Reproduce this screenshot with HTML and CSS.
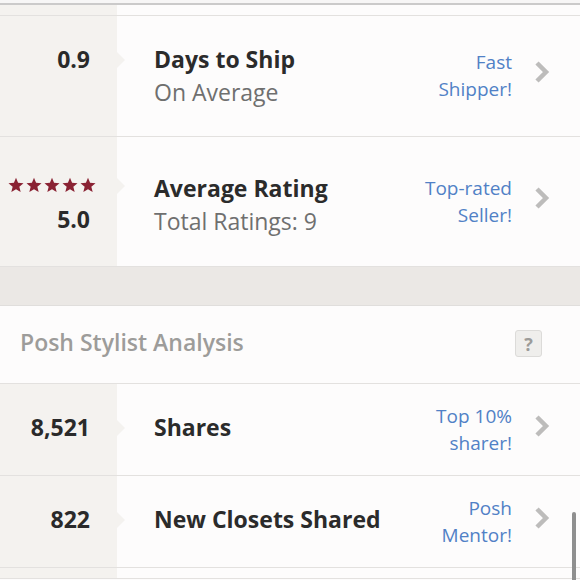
FILE: index.html
```html
<!DOCTYPE html>
<html lang="en">
<head>
  <meta charset="UTF-8" />
  <meta name="viewport" content="width=device-width, initial-scale=1.0"/>
  <title>Seller Stats</title>
  <link rel="stylesheet" href="styles.css">
</head>
<body>
  <div class="page">
    <div class="top-strip"></div>
    <div class="row stub">
      <div class="stat"></div>
      <div class="info"></div>
    </div>

    <div class="row tall">
      <div class="stat two-line">
        <span class="value">0.9</span>
        <span class="value"></span>
      </div>
      <div class="info">
        <div class="text">
          <div class="title">Days to Ship</div>
          <div class="sub">On Average</div>
        </div>
        <div class="badge">Fast<br>Shipper!</div>
        <svg class="chevron" width="16" height="24" viewBox="0 0 16 24"><path d="M3 3 L12 12 L3 21" fill="none" stroke="#bdbcbb" stroke-width="4.5"/></svg>
      </div>
    </div>

    <div class="row taller">
      <div class="stat two-line">
        <span class="stars">
          <svg width="16" height="16" viewBox="0 0 24 24"><path d="M12 1 L15.1 8.6 L23.3 9.2 L17 14.5 L19 22.5 L12 18.2 L5 22.5 L7 14.5 L0.7 9.2 L8.9 8.6 Z" fill="#8a2233"/></svg>
          <svg width="16" height="16" viewBox="0 0 24 24"><path d="M12 1 L15.1 8.6 L23.3 9.2 L17 14.5 L19 22.5 L12 18.2 L5 22.5 L7 14.5 L0.7 9.2 L8.9 8.6 Z" fill="#8a2233"/></svg>
          <svg width="16" height="16" viewBox="0 0 24 24"><path d="M12 1 L15.1 8.6 L23.3 9.2 L17 14.5 L19 22.5 L12 18.2 L5 22.5 L7 14.5 L0.7 9.2 L8.9 8.6 Z" fill="#8a2233"/></svg>
          <svg width="16" height="16" viewBox="0 0 24 24"><path d="M12 1 L15.1 8.6 L23.3 9.2 L17 14.5 L19 22.5 L12 18.2 L5 22.5 L7 14.5 L0.7 9.2 L8.9 8.6 Z" fill="#8a2233"/></svg>
          <svg width="16" height="16" viewBox="0 0 24 24"><path d="M12 1 L15.1 8.6 L23.3 9.2 L17 14.5 L19 22.5 L12 18.2 L5 22.5 L7 14.5 L0.7 9.2 L8.9 8.6 Z" fill="#8a2233"/></svg>
        </span>
        <span class="value">5.0</span>
      </div>
      <div class="info">
        <div class="text">
          <div class="title">Average Rating</div>
          <div class="sub">Total Ratings: 9</div>
        </div>
        <div class="badge">Top-rated<br>Seller!</div>
        <svg class="chevron" width="16" height="24" viewBox="0 0 16 24"><path d="M3 3 L12 12 L3 21" fill="none" stroke="#bdbcbb" stroke-width="4.5"/></svg>
      </div>
    </div>

    <div class="band"></div>

    <div class="section-head">
      <span>Posh Stylist Analysis</span>
      <span class="help">?</span>
    </div>

    <div class="row single">
      <div class="stat"><span class="value">8,521</span></div>
      <div class="info">
        <div class="text">
          <div class="title">Shares</div>
        </div>
        <div class="badge">Top 10%<br>sharer!</div>
        <svg class="chevron" width="16" height="24" viewBox="0 0 16 24"><path d="M3 3 L12 12 L3 21" fill="none" stroke="#bdbcbb" stroke-width="4.5"/></svg>
      </div>
    </div>

    <div class="row single">
      <div class="stat"><span class="value">822</span></div>
      <div class="info">
        <div class="text">
          <div class="title">New Closets Shared</div>
        </div>
        <div class="badge">Posh<br>Mentor!</div>
        <svg class="chevron" width="16" height="24" viewBox="0 0 16 24"><path d="M3 3 L12 12 L3 21" fill="none" stroke="#bdbcbb" stroke-width="4.5"/></svg>
      </div>
    </div>

    <div class="row stub">
      <div class="stat"></div>
      <div class="info"></div>
    </div>

    <div class="scrollbar"></div>
  </div>
</body>
</html>
```

FILE: styles.css
```css
body {
  margin: 0;
  font-family: "Open Sans", Lato, sans-serif;
  background: #fdfcfc;
}
.page {
  width: 580px;
  height: 580px;
  overflow: hidden;
  position: relative;
}
.top-strip {
  height: 3px;
  background: #f7f6f6;
  border-bottom: 2px solid #cbcaca;
}
.row {
  display: grid;
  grid-template-columns: 117px 1fr;
  height: 91px;
  border-bottom: 1px solid #e3e1df;
}
.row.stub {
  height: 10px;
}
.row.tall {
  height: 120px;
}
.row.taller {
  height: 129px;
}
.stat {
  background: #f4f2ef;
  display: flex;
  flex-direction: column;
  align-items: flex-end;
  justify-content: center;
  padding-right: 27px;
  position: relative;
}
.stat::after {
  content: "";
  position: absolute;
  right: -8px;
  top: 50%;
  margin-top: -10px;
  border-left: 8px solid #f4f2ef;
  border-top: 8px solid transparent;
  border-bottom: 8px solid transparent;
}
.stat.two-line::after {
  margin-top: -24px;
}
.row.stub .stat::after {
  display: none;
}
.row.taller .stat,
.row.taller .text {
  padding-top: 6px;
}
.row.single .stat,
.row.single .text {
  padding-bottom: 4px;
}
.stars {
  display: flex;
  gap: 2px;
  height: 32px;
  align-items: center;
  margin-right: -6px;
  margin-top: -4px;
  margin-bottom: 2px;
}
.stars svg {
  display: block;
}
.value {
  font-size: 23px;
  font-weight: 700;
  color: #2a2a2a;
  line-height: 33px;
  min-height: 33px;
}
.info {
  display: flex;
  align-items: center;
  padding-left: 37px;
  padding-right: 30px;
}
.text {
  flex: 1;
}
.title {
  font-size: 23px;
  font-weight: 700;
  color: #2b2b2b;
  line-height: 33px;
}
.sub {
  font-size: 23px;
  color: #6f6f6f;
  line-height: 33px;
}
.badge {
  text-align: right;
  font-size: 19px;
  line-height: 27px;
  color: #5181c6;
  margin-right: 22px;
}
.chevron {
  display: block;
  margin-top: -8px;
}
.band {
  height: 38px;
  background: #ebe8e5;
  border-bottom: 1px solid #e0dedc;
}
.section-head {
  height: 71px;
  display: flex;
  align-items: center;
  justify-content: space-between;
  padding: 0 38px 6px 20px;
  border-bottom: 1px solid #e3e1df;
  font-size: 23px;
  font-weight: 600;
  color: #9d9c9a;
}
.help {
  width: 25px;
  height: 25px;
  margin-top: 4px;
  border: 1px solid #dcdbd9;
  border-radius: 3px;
  background: #efeeec;
  font-size: 18px;
  font-weight: 700;
  color: #9c9b99;
  display: flex;
  align-items: center;
  justify-content: center;
}
.scrollbar {
  position: absolute;
  right: 4px;
  top: 512px;
  width: 4px;
  height: 80px;
  border-radius: 2px;
  background: #8f8f8f;
}
```
